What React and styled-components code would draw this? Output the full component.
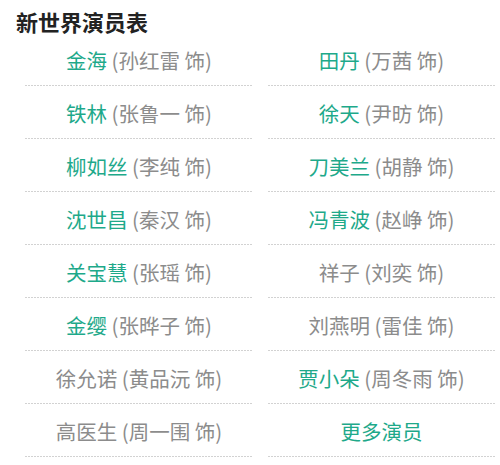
import styled, {createGlobalStyle} from 'styled-components';

const GlobalStyle = createGlobalStyle`
    body {
        margin: 0;
        background: #fff;
        font-family: "Noto Sans CJK SC", "Noto Sans", sans-serif;
    }
`

const Page = styled.div`
    width: 500px;
    height: 465px;
    overflow: hidden;
`

const Title = styled.h2`
    margin: 0;
    padding: 9px 0 0 16px;
    height: 24px;
    font-size: 22px;
    line-height: 24px;
    font-weight: 700;
    color: #222;
`

const CastGrid = styled.div`
    display: grid;
    grid-template-columns: 228px 227px;
    column-gap: 15px;
    padding: 0 5px 0 25px;
`

// fine dotted rule like the original, css dashed is too coarse
const CastItem = styled.div`
    height: 53px;
    display: flex;
    align-items: center;
    justify-content: center;
    padding-top: 1px;
    box-sizing: border-box;
    background-image: repeating-linear-gradient(to right, #d2d2d2 0 2px, transparent 2px 3px);
    background-size: 100% 1px;
    background-position: left bottom;
    background-repeat: no-repeat;
    font-size: 20.5px;
    color: #8c8c8c;
    white-space: nowrap;
`

const Role = styled.span`
    color: ${p => p.$linked ? '#1ea98a' : '#8c8c8c'};
`

const cast = [
    {role: '金海', actor: '孙红雷', linked: true},
    {role: '田丹', actor: '万茜', linked: true},
    {role: '铁林', actor: '张鲁一', linked: true},
    {role: '徐天', actor: '尹昉', linked: true},
    {role: '柳如丝', actor: '李纯', linked: true},
    {role: '刀美兰', actor: '胡静', linked: true},
    {role: '沈世昌', actor: '秦汉', linked: true},
    {role: '冯青波', actor: '赵峥', linked: true},
    {role: '关宝慧', actor: '张瑶', linked: true},
    {role: '祥子', actor: '刘奕', linked: false},
    {role: '金缨', actor: '张晔子', linked: true},
    {role: '刘燕明', actor: '雷佳', linked: false},
    {role: '徐允诺', actor: '黄品沅', linked: false},
    {role: '贾小朵', actor: '周冬雨', linked: true},
    {role: '高医生', actor: '周一围', linked: false},
]

export default function App() {
    return (
        <>
        <GlobalStyle />
        <Page>
            <Title>新世界演员表</Title>
            <CastGrid>
                {cast.map((item, index) => (
                    <CastItem key={index}>
                        <Role $linked={item.linked}>{item.role}</Role>
                        &nbsp;({item.actor} 饰)
                    </CastItem>
                ))}
                <CastItem>
                    <Role $linked>更多演员</Role>
                </CastItem>
            </CastGrid>
        </Page>
        </>
    )
}
